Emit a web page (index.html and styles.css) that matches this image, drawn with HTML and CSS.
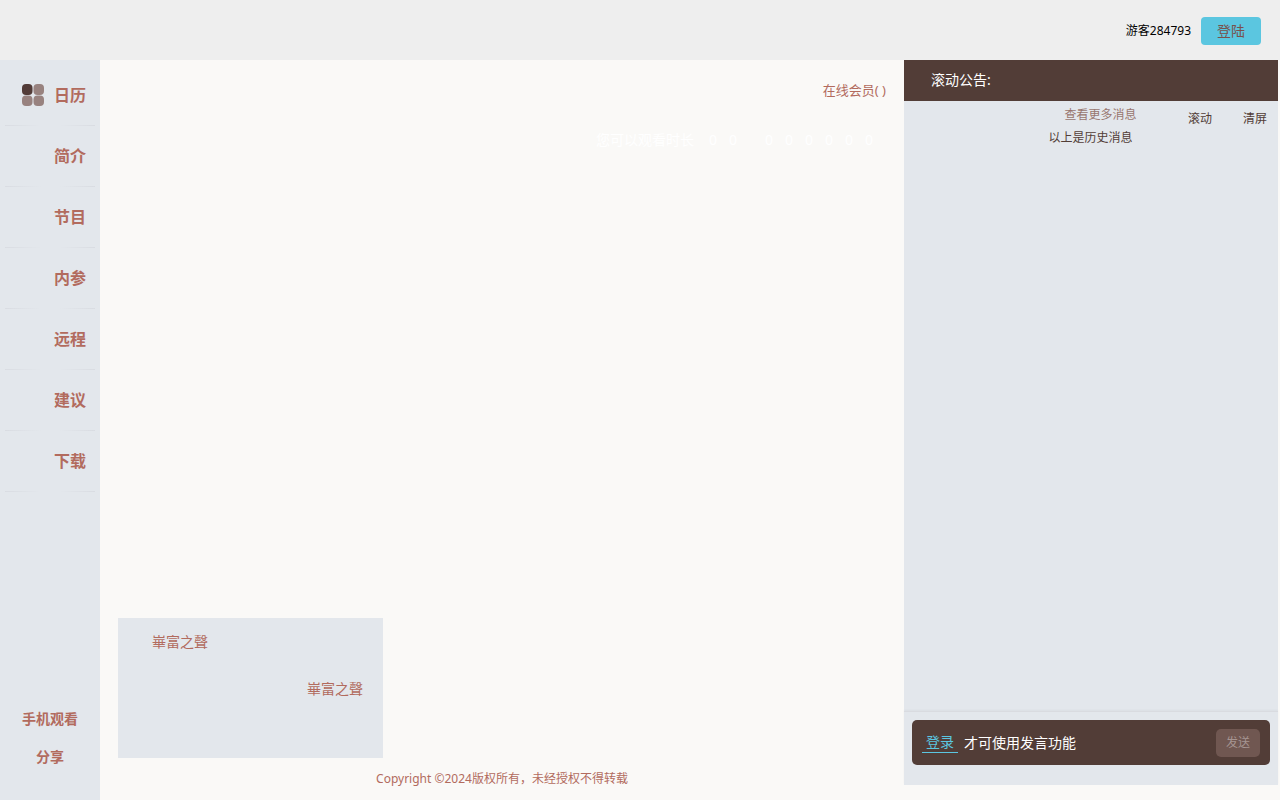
FILE: index.html
```html
<!DOCTYPE html>
<html lang="zh-CN">
<head>
  <meta charset="UTF-8" />
  <meta name="viewport" content="width=device-width, initial-scale=1.0" />
  <title>崋富之聲</title>
  <link rel="stylesheet" href="styles.css">
</head>
<body>
  <header class="header">
    <span class="user-name">游客284793</span>
    <button type="button" class="login-btn">登陆</button>
  </header>

  <div class="wrap">
    <nav class="sidebar">
      <ul class="menu">
        <li>
          <a href="#">
            <svg class="menu-icon" width="24" height="24" viewBox="0 0 24 24">
              <rect x="1" y="1" width="10.5" height="11" rx="4" fill="#523b37"/>
              <rect x="12.5" y="1" width="10.5" height="11" rx="4" fill="#98827f"/>
              <rect x="1" y="12.5" width="10.5" height="10.5" rx="4" fill="#98827f"/>
              <rect x="12.5" y="12.5" width="10.5" height="10.5" rx="4" fill="#98827f"/>
            </svg>
            日历
          </a>
        </li>
        <li><a href="#">简介</a></li>
        <li><a href="#">节目</a></li>
        <li><a href="#">内参</a></li>
        <li><a href="#">远程</a></li>
        <li><a href="#">建议</a></li>
        <li><a href="#">下载</a></li>
      </ul>
      <div class="side-links">
        <a href="#">手机观看</a>
        <a href="#">分享</a>
      </div>
    </nav>

    <main class="main">
      <div class="online">在线会员( )</div>
      <div class="watch-time">
        <span class="watch-label">您可以观看时长</span>
        <span class="digits"><i>0</i><i>0</i></span>
        <span class="digits"><i>0</i><i>0</i><i>0</i><i>0</i><i>0</i><i>0</i></span>
      </div>
      <div class="voice">
        <p>崋富之聲</p>
        <p class="voice-right">崋富之聲</p>
      </div>
      <footer class="copyright">Copyright ©2024版权所有，未经授权不得转载</footer>
    </main>

    <aside class="chat">
      <div class="notice">滚动公告:</div>
      <div class="messages">
        <div class="history">
          <a href="#">查看更多消息</a>
          <p>以上是历史消息</p>
        </div>
        <div class="tools">
          <button type="button">滚动</button>
          <button type="button">清屏</button>
        </div>
      </div>
      <div class="send-area">
        <div class="send-box">
          <a href="#">登录</a>
          <span>才可使用发言功能</span>
          <button type="button" class="send-btn" disabled>发送</button>
        </div>
      </div>
    </aside>
  </div>
</body>
</html>
```
FILE: styles.css
```css
* {
  box-sizing: border-box;
}
body {
  margin: 0;
  height: 100vh;
  display: flex;
  flex-direction: column;
  background: #faf9f7;
  color: #b26b5e;
  font-family: "Noto Sans", "Noto Sans CJK SC", sans-serif;
  font-size: 14px;
  line-height: 20px;
}
a {
  color: inherit;
  text-decoration: none;
}
p {
  margin: 0;
}
button {
  border: none;
  padding: 0;
  background: none;
  font-family: inherit;
  line-height: 20px;
  cursor: pointer;
}
.header {
  height: 60px;
  padding: 2px 19px 0;
  display: flex;
  align-items: center;
  justify-content: flex-end;
  gap: 10px;
  background: #eee;
}
.user-name {
  color: #000;
  font-size: 12px;
}
.login-btn {
  width: 60px;
  height: 28px;
  border-radius: 4px;
  background: #5bc6e0;
  color: #78514c;
  font-size: 14px;
}
.wrap {
  flex: 1;
  display: flex;
  min-height: 0;
}

/* left menu */
.sidebar {
  width: 100px;
  padding: 5px 5px 33px;
  display: flex;
  flex-direction: column;
  justify-content: space-between;
  background: #e3e7ec;
}
.menu {
  margin: 0;
  padding: 0;
  list-style: none;
}
.menu li::after {
  content: "";
  display: block;
  height: 1px;
  background: linear-gradient(to right, #d9dce2, #e3e7ec 40%, #e3e7ec 60%, #d9dce2);
}
.menu a {
  height: 60px;
  padding-right: 9px;
  display: flex;
  align-items: center;
  justify-content: flex-end;
  gap: 9px;
  font-size: 16px;
  font-weight: bold;
}
.side-links {
  display: flex;
  flex-direction: column;
  align-items: center;
  gap: 18px;
  font-weight: bold;
}

/* video area */
.main {
  flex: 1;
  padding: 20px 18px 11px;
  display: flex;
  flex-direction: column;
}
.online {
  align-self: flex-end;
  font-size: 13px;
}
.watch-time {
  margin-top: 30px;
  padding-right: 7px;
  display: flex;
  justify-content: flex-end;
  gap: 16px;
  color: #fff;
}
.digits {
  display: flex;
}
.digits:nth-child(2) {
  margin-left: -7px;
}
.digits i {
  width: 20px;
  font-style: normal;
  text-align: center;
}
.voice {
  width: 265px;
  height: 140px;
  margin-top: auto;
  padding: 14px 20px 14px 34px;
  background: #e3e7ec;
}
.voice-right {
  margin-top: 27px;
  text-align: right;
}
.copyright {
  margin-top: 11px;
  font-size: 12px;
  text-align: center;
}

/* chat */
.chat {
  width: 374px;
  margin: 0 2px 15px 0;
  display: flex;
  flex-direction: column;
  background: #e3e7ec;
}
.notice {
  height: 41px;
  padding: 10px 27px;
  background: #523d37;
  color: #fff;
}
.messages {
  flex: 1;
  padding: 4px 11px 0 14px;
  display: grid;
  grid-template-columns: 1fr auto 1fr;
  align-items: start;
  font-size: 12px;
}
.history {
  grid-column: 2;
  color: #523d37;
}
.history a {
  display: block;
  padding-left: 16px;
  color: #98766f;
}
.history p {
  margin-top: 3px;
}
.tools {
  margin-top: 4px;
  display: flex;
  justify-content: flex-end;
  gap: 31px;
}
.tools button {
  color: #523d37;
  font-size: 12px;
}
.send-area {
  padding: 8px 8px 20px;
  border-top: 1px solid #d9dbe0;
  box-shadow: 0 -1px 2px rgba(0, 0, 0, 0.04);
}
.send-box {
  height: 45px;
  padding: 0 10px;
  display: flex;
  align-items: center;
  gap: 6px;
  border-radius: 5px;
  background: #523d37;
  color: #fff;
}
.send-box a {
  padding: 0 4px;
  border-bottom: 1px solid #5bc6e0;
  color: #5bc6e0;
}
.send-btn {
  width: 44px;
  height: 28px;
  margin-left: auto;
  border-radius: 5px;
  background: #705751;
  color: #a69592;
  font-size: 12px;
  cursor: default;
}
```
